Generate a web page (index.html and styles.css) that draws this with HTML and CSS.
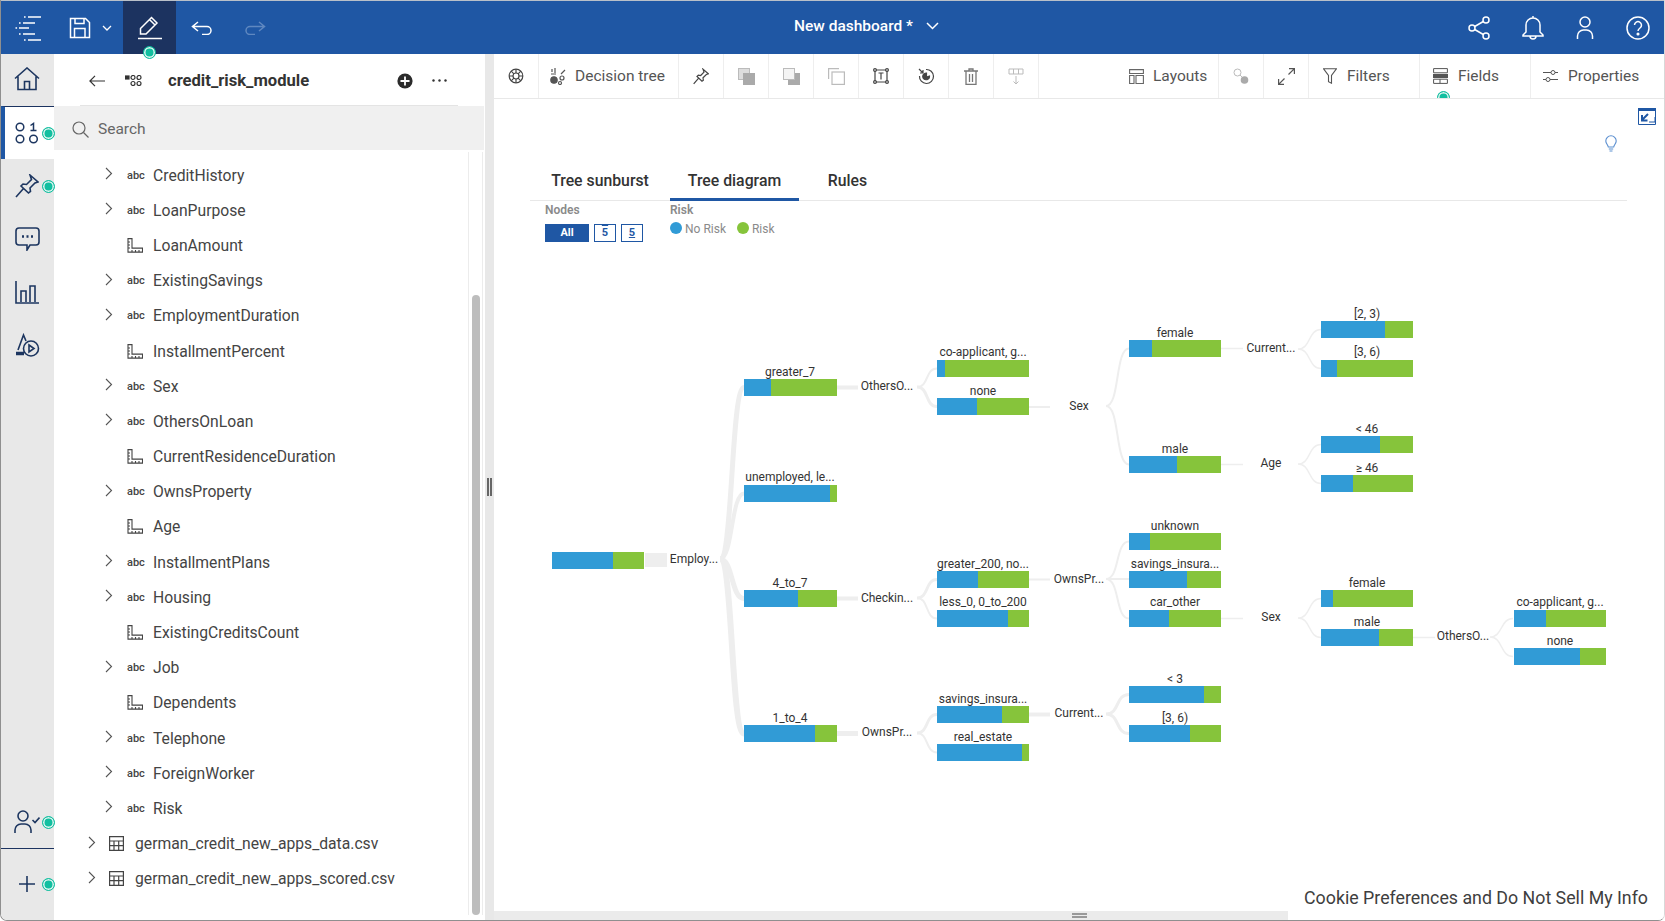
FILE: index.html
```html
<!DOCTYPE html>
<html lang="en">
<head>
<meta charset="utf-8">
<title>New dashboard</title>
<link rel="stylesheet" href="styles.css">
</head>
<body>
<div class="app">
  <header class="topbar">
    <div class="tb-left">
      <button class="tb-btn tb-menu"><svg width="27" height="26" viewBox="0 0 27 26" fill="none" stroke="#fff" stroke-width="1.6"><path d="M13 2h13M8 8h12M4 13h10M8 19h12M13 25h13"/><path d="M9 2h1.6M4 8h1.6M0.5 13h1.6M4 19h1.6M9 25h1.6"/></svg></button>
      <button class="tb-btn tb-save"><svg width="22" height="22" viewBox="0 0 22 22" fill="none" stroke="#fff" stroke-width="1.5"><path d="M1.5 1.5h15l4 4v15h-19z"/><path d="M6 1.5v5h9v-5M5.5 20.5v-9h10.500v9"/></svg><svg class="save-chev" width="10" height="6" viewBox="0 0 10 6" fill="none" stroke="#fff" stroke-width="1.300"><path d="M1 1l4 4 4-4"/></svg></button>
      <button class="tb-btn tb-edit"><svg width="26" height="24" viewBox="0 0 26 24" fill="none" stroke="#fff" stroke-width="1.5"><path d="M3.500 12.500L14.500 1.500l5.500 5.500-11 11H3.500zM12.500 3.500l5.500 5.500"/><path d="M1 22.500h24"/></svg><span class="dot dot-edit"></span></button>
      <button class="tb-btn tb-undo"><svg width="22" height="14" viewBox="0 0 22 14" fill="none" stroke="#fff" stroke-width="1.500"><path d="M7 1L1.500 5.500 7 10M1.500 5.500H16a4 4 0 0 1 0 8h-5"/></svg></button>
      <button class="tb-btn tb-redo"><svg width="22" height="14" viewBox="0 0 22 14" fill="none" stroke="#5f88c0" stroke-width="1.500"><path d="M15 1l5.500 4.500L15 10M20.500 5.500H6a4 4 0 0 0 0 8h5"/></svg></button>
    </div>
    <div class="tb-title"><span>New dashboard *</span><svg width="13" height="8" viewBox="0 0 13 8" fill="none" stroke="#fff" stroke-width="1.500"><path d="M1 1l5.500 5.500L12 1"/></svg></div>
    <div class="tb-right">
      <svg width="22" height="24" viewBox="0 0 22 24" fill="none" stroke="#fff" stroke-width="1.500"><circle cx="4" cy="12" r="3"/><circle cx="18" cy="4" r="3"/><circle cx="18" cy="20" r="3"/><path d="M6.700 10.500L15.300 5.500M6.700 13.500l8.600 5"/></svg>
      <svg width="22" height="26" viewBox="0 0 22 26" fill="none" stroke="#fff" stroke-width="1.500"><path d="M11 3a7 7 0 0 1 7 7v7l3 3v1H1v-1l3-3v-7a7 7 0 0 1 7-7zM11 1v2M8 21a3 3 0 0 0 6 0"/></svg>
      <svg width="18" height="24" viewBox="0 0 18 24" fill="none" stroke="#fff" stroke-width="1.500"><circle cx="9" cy="6" r="5"/><path d="M1.500 23v-3a6 6 0 0 1 6-6h3a6 6 0 0 1 6 6v3"/></svg>
      <svg width="24" height="24" viewBox="0 0 24 24" fill="none" stroke="#fff" stroke-width="1.500"><circle cx="12" cy="12" r="11"/><path d="M8.500 9a3.500 3.500 0 1 1 5.500 3c-1.300.9-2 1.500-2 3"/><circle cx="12" cy="18" r=".8" fill="#fff"/></svg>
    </div>
  </header>

  <div class="workspace">
    <nav class="rail">
      <div class="rail-item rail-home"><svg width="26" height="24" viewBox="0 0 26 24" fill="none" stroke="#1d3660" stroke-width="1.600"><path d="M1 11.500L13 1l12 10.500M4 9.500V22.500h18V9.500M10.500 22.500v-8h5v8"/></svg></div>
      <div class="rail-item is-active"><svg width="24" height="22" viewBox="0 0 24 22" fill="none" stroke="#1d3660" stroke-width="1.500"><circle cx="5" cy="5" r="3.800"/><circle cx="5" cy="17" r="3.800"/><circle cx="18.500" cy="17" r="3.800"/><path d="M15.500 3.500L18.500 1.500v7M15.500 8.500h6"/></svg><span class="dot dot-rail"></span></div>
      <div class="rail-item"><svg width="24" height="24" viewBox="0 0 24 24" fill="none" stroke="#1d3660" stroke-width="1.600"><path d="M15 1l8 7-3 1-5 5 .5 3.500-2 1.500-7.500-7 2-2 3.500.5 5-5zM8.500 14.500L1 23"/></svg><span class="dot dot-rail"></span></div>
      <div class="rail-item"><svg width="25" height="24" viewBox="0 0 25 24" fill="none" stroke="#1d3660" stroke-width="1.600"><path d="M4 1h17a3 3 0 0 1 3 3v11a3 3 0 0 1-3 3h-6l-3 5v-5H4a3 3 0 0 1-3-3V4a3 3 0 0 1 3-3z"/><path d="M7 9.500h2M11.500 9.500h2M16 9.500h2" stroke-width="2.400"/></svg></div>
      <div class="rail-item"><svg width="24" height="24" viewBox="0 0 24 24" fill="none" stroke="#1d3660" stroke-width="1.600"><path d="M1 1v22h23"/><path d="M6 22V11h5v11M15 22V6h5v16"/></svg></div>
      <div class="rail-item"><svg width="25" height="24" viewBox="0 0 25 24" fill="none" stroke="#1d3660" stroke-width="1.600"><path d="M3 17L8.500 2 11 8"/><path d="M1 20.500h8" stroke-width="3.500"/><circle cx="16" cy="15.500" r="7.500"/><path d="M14 12l5 3.500-5 3.500z"/></svg></div>
      <div class="rail-spacer"></div>
      <div class="rail-item rail-user"><svg width="26" height="24" viewBox="0 0 26 24" fill="none" stroke="#1d3660" stroke-width="1.600"><circle cx="9" cy="6" r="5"/><path d="M1 23v-3a6 6 0 0 1 6-6h4a6 6 0 0 1 6 6v3M18.500 10l2.500 2.500 4.500-5"/></svg><span class="dot dot-rail"></span></div>
      <div class="rail-item rail-add"><svg width="16" height="16" viewBox="0 0 16 16" fill="none" stroke="#1d3660" stroke-width="1.600"><path d="M8 0v16M0 8h16"/></svg><span class="dot dot-rail"></span></div>
    </nav>

    <aside class="panel">
      <div class="panel-head">
        <svg class="ph-back" width="16" height="12" viewBox="0 0 16 12" fill="none" stroke="#333" stroke-width="1.200"><path d="M6 .8L.9 6 6 11.200M1 6h15"/></svg>
        <svg class="ph-mod" width="17" height="11" viewBox="0 0 17 11" fill="none" stroke="#333" stroke-width="1.200"><rect x="0" y="1" width="4" height="3" fill="#333"/><circle cx="8" cy="2.500" r="2"/><circle cx="14" cy="2.500" r="2"/><circle cx="8" cy="8.500" r="2"/><circle cx="14" cy="8.500" r="2"/></svg>
        <span class="ph-title">credit_risk_module</span>
        <svg class="ph-add" width="16" height="16" viewBox="0 0 16 16"><circle cx="8" cy="8" r="7.600" fill="#2b2b2b"/><path d="M8 3.500v9M3.500 8h9" stroke="#fff" stroke-width="1.800"/></svg>
        <svg class="ph-more" width="15" height="3" viewBox="0 0 15 3" fill="#333"><circle cx="1.500" cy="1.500" r="1.200"/><circle cx="7.500" cy="1.500" r="1.200"/><circle cx="13.500" cy="1.500" r="1.200"/></svg>
      </div>
      <div class="search">
        <svg width="17" height="17" viewBox="0 0 17 17" fill="none" stroke="#666" stroke-width="1.200"><circle cx="7" cy="7" r="6"/><path d="M11.500 11.500L16.500 16.500"/></svg>
        <span>Search</span>
      </div>
      <div class="list-wrap">
        <ul class="tree-list">
          <li class="row"><svg class="chev" width="8" height="13" viewBox="0 0 8 13" fill="none" stroke="#555" stroke-width="1.100"><path d="M1 1l5.500 5.500L1 12"/></svg><span class="abc">abc</span><span class="lbl">CreditHistory</span></li>
          <li class="row"><svg class="chev" width="8" height="13" viewBox="0 0 8 13" fill="none" stroke="#555" stroke-width="1.100"><path d="M1 1l5.500 5.500L1 12"/></svg><span class="abc">abc</span><span class="lbl">LoanPurpose</span></li>
          <li class="row"><span class="nochev"></span><svg class="rule" width="16" height="15" viewBox="0 0 16 15" fill="none" stroke="#444" stroke-width="1.100"><path d="M1 .6h4v9.500h10.500v4H1zM1 4h2M1 7h2M1 10h2M5 14v-2M8.500 14v-2M12 14v-2"/></svg><span class="lbl">LoanAmount</span></li>
          <li class="row"><svg class="chev" width="8" height="13" viewBox="0 0 8 13" fill="none" stroke="#555" stroke-width="1.100"><path d="M1 1l5.500 5.500L1 12"/></svg><span class="abc">abc</span><span class="lbl">ExistingSavings</span></li>
          <li class="row"><svg class="chev" width="8" height="13" viewBox="0 0 8 13" fill="none" stroke="#555" stroke-width="1.100"><path d="M1 1l5.500 5.500L1 12"/></svg><span class="abc">abc</span><span class="lbl">EmploymentDuration</span></li>
          <li class="row"><span class="nochev"></span><svg class="rule" width="16" height="15" viewBox="0 0 16 15" fill="none" stroke="#444" stroke-width="1.100"><path d="M1 .6h4v9.500h10.500v4H1zM1 4h2M1 7h2M1 10h2M5 14v-2M8.500 14v-2M12 14v-2"/></svg><span class="lbl">InstallmentPercent</span></li>
          <li class="row"><svg class="chev" width="8" height="13" viewBox="0 0 8 13" fill="none" stroke="#555" stroke-width="1.100"><path d="M1 1l5.500 5.500L1 12"/></svg><span class="abc">abc</span><span class="lbl">Sex</span></li>
          <li class="row"><svg class="chev" width="8" height="13" viewBox="0 0 8 13" fill="none" stroke="#555" stroke-width="1.100"><path d="M1 1l5.500 5.500L1 12"/></svg><span class="abc">abc</span><span class="lbl">OthersOnLoan</span></li>
          <li class="row"><span class="nochev"></span><svg class="rule" width="16" height="15" viewBox="0 0 16 15" fill="none" stroke="#444" stroke-width="1.100"><path d="M1 .6h4v9.500h10.500v4H1zM1 4h2M1 7h2M1 10h2M5 14v-2M8.500 14v-2M12 14v-2"/></svg><span class="lbl">CurrentResidenceDuration</span></li>
          <li class="row"><svg class="chev" width="8" height="13" viewBox="0 0 8 13" fill="none" stroke="#555" stroke-width="1.100"><path d="M1 1l5.500 5.500L1 12"/></svg><span class="abc">abc</span><span class="lbl">OwnsProperty</span></li>
          <li class="row"><span class="nochev"></span><svg class="rule" width="16" height="15" viewBox="0 0 16 15" fill="none" stroke="#444" stroke-width="1.100"><path d="M1 .6h4v9.500h10.500v4H1zM1 4h2M1 7h2M1 10h2M5 14v-2M8.500 14v-2M12 14v-2"/></svg><span class="lbl">Age</span></li>
          <li class="row"><svg class="chev" width="8" height="13" viewBox="0 0 8 13" fill="none" stroke="#555" stroke-width="1.100"><path d="M1 1l5.500 5.500L1 12"/></svg><span class="abc">abc</span><span class="lbl">InstallmentPlans</span></li>
          <li class="row"><svg class="chev" width="8" height="13" viewBox="0 0 8 13" fill="none" stroke="#555" stroke-width="1.100"><path d="M1 1l5.500 5.500L1 12"/></svg><span class="abc">abc</span><span class="lbl">Housing</span></li>
          <li class="row"><span class="nochev"></span><svg class="rule" width="16" height="15" viewBox="0 0 16 15" fill="none" stroke="#444" stroke-width="1.100"><path d="M1 .6h4v9.500h10.500v4H1zM1 4h2M1 7h2M1 10h2M5 14v-2M8.500 14v-2M12 14v-2"/></svg><span class="lbl">ExistingCreditsCount</span></li>
          <li class="row"><svg class="chev" width="8" height="13" viewBox="0 0 8 13" fill="none" stroke="#555" stroke-width="1.100"><path d="M1 1l5.500 5.500L1 12"/></svg><span class="abc">abc</span><span class="lbl">Job</span></li>
          <li class="row"><span class="nochev"></span><svg class="rule" width="16" height="15" viewBox="0 0 16 15" fill="none" stroke="#444" stroke-width="1.100"><path d="M1 .6h4v9.500h10.500v4H1zM1 4h2M1 7h2M1 10h2M5 14v-2M8.500 14v-2M12 14v-2"/></svg><span class="lbl">Dependents</span></li>
          <li class="row"><svg class="chev" width="8" height="13" viewBox="0 0 8 13" fill="none" stroke="#555" stroke-width="1.100"><path d="M1 1l5.500 5.500L1 12"/></svg><span class="abc">abc</span><span class="lbl">Telephone</span></li>
          <li class="row"><svg class="chev" width="8" height="13" viewBox="0 0 8 13" fill="none" stroke="#555" stroke-width="1.100"><path d="M1 1l5.500 5.500L1 12"/></svg><span class="abc">abc</span><span class="lbl">ForeignWorker</span></li>
          <li class="row"><svg class="chev" width="8" height="13" viewBox="0 0 8 13" fill="none" stroke="#555" stroke-width="1.100"><path d="M1 1l5.500 5.500L1 12"/></svg><span class="abc">abc</span><span class="lbl">Risk</span></li>
          <li class="row row-top"><svg class="chev" width="8" height="13" viewBox="0 0 8 13" fill="none" stroke="#555" stroke-width="1.100"><path d="M1 1l5.500 5.500L1 12"/></svg><svg class="tbl" width="15" height="15" viewBox="0 0 15 15" fill="none" stroke="#444" stroke-width="1.200"><path d="M.6.6h13.800v13.800H.6zM.6 5h13.800M.6 9.700h13.800M5 5v9.400M9.700 5v9.400"/></svg><span class="lbl">german_credit_new_apps_data.csv</span></li>
          <li class="row row-top"><svg class="chev" width="8" height="13" viewBox="0 0 8 13" fill="none" stroke="#555" stroke-width="1.100"><path d="M1 1l5.500 5.500L1 12"/></svg><svg class="tbl" width="15" height="15" viewBox="0 0 15 15" fill="none" stroke="#444" stroke-width="1.200"><path d="M.6.6h13.800v13.800H.6zM.6 5h13.800M.6 9.700h13.800M5 5v9.400M9.700 5v9.400"/></svg><span class="lbl">german_credit_new_apps_scored.csv</span></li>
        </ul>
        <div class="scroll"><div class="thumb"></div></div>
      </div>
    </aside>

    <div class="splitter"><span class="grip"></span></div>

    <main class="main">
      <svg class="tree" viewBox="494 54 1171 867" width="1171" height="867">
        <g class="lk" fill="none">
          <path class="w14" d="M645 560H667"/>
          <path class="w5" d="M720 559C733 559 731 387.500 744 387.500"/>
          <path class="w4" d="M720 559C733 559 731 493.500 744 493.500"/>
          <path class="w5" d="M720 559C733 559 731 598.500 744 598.500"/>
          <path class="w6" d="M720 559C733 559 731 733.500 744 733.500"/>
          <path class="w4" d="M837 387.500H858M837 598.500H858"/>
          <path class="w5" d="M837 733.500H858"/>
          <path class="w2" d="M917 387C929 387 925 368.500 937 368.500"/>
          <path class="w3" d="M917 387C929 387 925 406.500 937 406.500"/>
          <path class="w3" d="M917 598C929 598 925 579.500 937 579.500"/>
          <path class="w2" d="M917 598C929 598 925 618.500 937 618.500"/>
          <path class="w3" d="M917 733C929 733 925 714.500 937 714.500"/>
          <path class="w2" d="M917 733C929 733 925 752.500 937 752.500"/>
          <path class="w2" d="M1029 407H1050M1029 579.500H1050"/>
          <path class="w4" d="M1029 714.500H1050"/>
          <path class="w2" d="M1106 406C1120 406 1115 348.500 1129 348.500M1106 406C1120 406 1115 464.500 1129 464.500"/>
          <path class="w2" d="M1106 579C1120 579 1115 541.500 1129 541.500M1106 579H1129M1106 579C1120 579 1115 618.500 1129 618.500"/>
          <path class="w3" d="M1106 714C1120 714 1115 694.500 1129 694.500M1106 714C1120 714 1115 733.500 1129 733.500"/>
          <path class="w1" d="M1221 348.500H1243M1221 464.500H1243M1221 618.500H1243M1413 637.500H1435"/>
          <path class="w1" d="M1298 349C1311 349 1308 329.500 1321 329.500M1298 349C1311 349 1308 368.500 1321 368.500M1298 464C1311 464 1308 444.500 1321 444.500M1298 464C1311 464 1308 483.500 1321 483.500M1298 618C1311 618 1308 598.500 1321 598.500M1298 618C1311 618 1308 637.500 1321 637.500M1490 637C1503 637 1500 618.500 1513 618.500M1490 637C1503 637 1500 656.500 1513 656.500"/>
        </g>
        <g class="bl">
          <rect x="552" y="552" width="61" height="17"/>
          <rect x="744" y="379" width="27" height="17"/>
          <rect x="744" y="485" width="86" height="17"/>
          <rect x="744" y="590" width="54" height="17"/>
          <rect x="744" y="725" width="71" height="17"/>
          <rect x="937" y="360" width="8" height="17"/>
          <rect x="937" y="398" width="40" height="17"/>
          <rect x="937" y="571" width="41" height="17"/>
          <rect x="937" y="610" width="71" height="17"/>
          <rect x="937" y="706" width="65" height="17"/>
          <rect x="937" y="744" width="85" height="17"/>
          <rect x="1129" y="340" width="23" height="17"/>
          <rect x="1129" y="456" width="48" height="17"/>
          <rect x="1129" y="533" width="21" height="17"/>
          <rect x="1129" y="571" width="58" height="17"/>
          <rect x="1129" y="610" width="40" height="17"/>
          <rect x="1129" y="686" width="75" height="17"/>
          <rect x="1129" y="725" width="61" height="17"/>
          <rect x="1321" y="321" width="64" height="17"/>
          <rect x="1321" y="360" width="16" height="17"/>
          <rect x="1321" y="436" width="59" height="17"/>
          <rect x="1321" y="475" width="32" height="17"/>
          <rect x="1321" y="590" width="12" height="17"/>
          <rect x="1321" y="629" width="58" height="17"/>
          <rect x="1514" y="610" width="32" height="17"/>
          <rect x="1514" y="648" width="66" height="17"/>
        </g>
        <g class="gr">
          <rect x="613" y="552" width="31" height="17"/>
          <rect x="771" y="379" width="66" height="17"/>
          <rect x="830" y="485" width="7" height="17"/>
          <rect x="798" y="590" width="39" height="17"/>
          <rect x="815" y="725" width="22" height="17"/>
          <rect x="945" y="360" width="84" height="17"/>
          <rect x="977" y="398" width="52" height="17"/>
          <rect x="978" y="571" width="51" height="17"/>
          <rect x="1008" y="610" width="21" height="17"/>
          <rect x="1002" y="706" width="27" height="17"/>
          <rect x="1022" y="744" width="7" height="17"/>
          <rect x="1152" y="340" width="69" height="17"/>
          <rect x="1177" y="456" width="44" height="17"/>
          <rect x="1150" y="533" width="71" height="17"/>
          <rect x="1187" y="571" width="34" height="17"/>
          <rect x="1169" y="610" width="52" height="17"/>
          <rect x="1204" y="686" width="17" height="17"/>
          <rect x="1190" y="725" width="31" height="17"/>
          <rect x="1385" y="321" width="28" height="17"/>
          <rect x="1337" y="360" width="76" height="17"/>
          <rect x="1380" y="436" width="33" height="17"/>
          <rect x="1353" y="475" width="60" height="17"/>
          <rect x="1333" y="590" width="80" height="17"/>
          <rect x="1379" y="629" width="34" height="17"/>
          <rect x="1546" y="610" width="60" height="17"/>
          <rect x="1580" y="648" width="26" height="17"/>
        </g>
        <g class="tl">
          <text x="790" y="376">greater_7</text>
          <text x="790" y="481">unemployed, le...</text>
          <text x="790" y="587">4_to_7</text>
          <text x="790" y="722">1_to_4</text>
          <text x="983" y="356">co-applicant, g...</text>
          <text x="983" y="395">none</text>
          <text x="983" y="568">greater_200, no...</text>
          <text x="983" y="606">less_0, 0_to_200</text>
          <text x="983" y="703">savings_insura...</text>
          <text x="983" y="741">real_estate</text>
          <text x="1175" y="337">female</text>
          <text x="1175" y="453">male</text>
          <text x="1175" y="530">unknown</text>
          <text x="1175" y="568">savings_insura...</text>
          <text x="1175" y="606">car_other</text>
          <text x="1175" y="683">&lt; 3</text>
          <text x="1175" y="722">[3, 6)</text>
          <text x="1367" y="318">[2, 3)</text>
          <text x="1367" y="356">[3, 6)</text>
          <text x="1367" y="433">&lt; 46</text>
          <text x="1367" y="472">≥ 46</text>
          <text x="1367" y="587">female</text>
          <text x="1367" y="626">male</text>
          <text x="1560" y="606">co-applicant, g...</text>
          <text x="1560" y="645">none</text>
          <text x="694" y="563">Employ...</text>
          <text x="887" y="390">OthersO...</text>
          <text x="887" y="602">Checkin...</text>
          <text x="887" y="736">OwnsPr...</text>
          <text x="1079" y="410">Sex</text>
          <text x="1079" y="583">OwnsPr...</text>
          <text x="1079" y="717">Current...</text>
          <text x="1271" y="352">Current...</text>
          <text x="1271" y="467">Age</text>
          <text x="1271" y="621">Sex</text>
          <text x="1463" y="640">OthersO...</text>
        </g>
      </svg>

      <div class="toolbar">
        <div class="cell"><svg width="16" height="16" viewBox="0 0 16 16" fill="none" stroke="#444" stroke-width="1.200"><circle cx="8" cy="8" r="6.800"/><circle cx="8" cy="8" r="3"/><path d="M8 1.200v3.800M8 11v3.800M1.200 8H5M11 8h3.800M3.200 3.200l2.700 2.700M10.100 10.100l2.700 2.700M12.800 3.200l-2.700 2.700M5.900 10.100l-2.700 2.700"/></svg></div>
        <div class="cell cell-viz"><svg width="16" height="17" viewBox="0 0 16 17" fill="none" stroke="#555" stroke-width="1.200"><path d="M2 1v3M5 0v5M1 6h5M11 6l4-4"/><circle cx="4" cy="12" r="3.200" fill="#555"/><circle cx="12" cy="10" r="2"/><circle cx="10" cy="15" r="1.500"/></svg><span>Decision tree</span></div>
        <div class="cell"><svg width="16" height="17" viewBox="0 0 24 24" fill="none" stroke="#444" stroke-width="1.800"><path d="M15 1l8 7-3 1-5 5 .5 3.500-2 1.500-7.500-7 2-2 3.500.500 5-5zM8.500 14.500L1 23"/></svg></div>
        <div class="cell"><svg width="17" height="17" viewBox="0 0 17 17"><rect x=".5" y=".5" width="11" height="11" fill="#ddd" stroke="#bbb"/><rect x="5" y="5" width="12" height="12" fill="#aaa"/></svg></div>
        <div class="cell"><svg width="17" height="17" viewBox="0 0 17 17"><rect x="5" y="5" width="12" height="12" fill="#aaa"/><rect x=".5" y=".5" width="11" height="11" fill="#f4f4f4" stroke="#bbb"/></svg></div>
        <div class="cell"><svg width="17" height="17" viewBox="0 0 17 17" fill="none" stroke="#bbb" stroke-width="1.200"><path d="M.6 11V.6H11"/><rect x="4" y="4" width="12.400" height="12.400"/></svg></div>
        <div class="cell"><svg width="16" height="16" viewBox="0 0 16 16" fill="none" stroke="#444" stroke-width="1.200"><path d="M3 2h10M14 3v10M13 14H3M2 13V3"/><circle cx="2" cy="2" r="1.400"/><circle cx="14" cy="2" r="1.400"/><circle cx="2" cy="14" r="1.400"/><circle cx="14" cy="14" r="1.400"/><path d="M5.500 5h5M8 5v6.500"/></svg></div>
        <div class="cell"><svg width="17" height="17" viewBox="0 0 17 17" fill="none" stroke="#444" stroke-width="1.200"><path d="M8 1.500A7 7 0 1 1 1.500 8"/><path d="M8.500 5v4l3-1a3.500 3.500 0 0 1-6.500 2 3.500 3.500 0 0 1 3.500-5z" fill="#444"/><path d="M1 1l4 4M2 5h3V2"/></svg></div>
        <div class="cell"><svg width="14" height="17" viewBox="0 0 14 17" fill="none" stroke="#777" stroke-width="1.300"><path d="M0 3h14M5 3V1h4v2M2 3v13.400h10V3M5.500 6v8M8.500 6v8"/></svg></div>
        <div class="cell"><svg width="16" height="17" viewBox="0 0 16 17" fill="none" stroke="#bbb" stroke-width="1"><path d="M1 1h14v5H1zM5.500 1v5M10.500 1v5"/><path d="M8 8v8M5.500 13.500L8 16l2.500-2.500"/></svg></div>
        <div class="tool-gap"></div>
        <div class="cell cell-text cell-layouts"><svg width="15" height="15" viewBox="0 0 15 15" fill="none" stroke="#666" stroke-width="1.100"><path d="M.6.6h13.800v3.900H.6zM.6 6.500h4.400v8H.6zM7 6.500h7.400v8H7z"/></svg><span>Layouts</span></div>
        <div class="cell"><svg width="16" height="17" viewBox="0 0 16 17"><circle cx="4.500" cy="4.500" r="3.500" fill="none" stroke="#bbb"/><path d="M7 7l3 3" stroke="#bbb"/><circle cx="11.500" cy="12" r="3.800" fill="#aaa"/></svg></div>
        <div class="cell"><svg width="17" height="17" viewBox="0 0 17 17" fill="none" stroke="#555" stroke-width="1.200"><path d="M10.500 6.500L16.400.6M11 .6h5.400V6M6.500 10.500L.6 16.400M6 16.400H.6V11"/></svg></div>
        <div class="cell cell-text cell-filters"><svg width="14" height="16" viewBox="0 0 14 16" fill="none" stroke="#555" stroke-width="1.100"><path d="M.6.8h12.800L8.500 7.500v7.700l-3-1.500V7.500z"/></svg><span>Filters</span></div>
        <div class="cell cell-text cell-fields"><svg width="15" height="16" viewBox="0 0 15 16"><path d="M.6.600h13.800v4.200H.6zM.6 11.200h13.800v4.200H.6z" fill="none" stroke="#555"/><rect y="6" width="15" height="4" fill="#555"/><path d="M7 11.200v4" stroke="#555"/></svg><span>Fields</span><span class="dot dot-fields"></span></div>
        <div class="cell cell-text cell-props"><svg width="15" height="14" viewBox="0 0 15 14" fill="none" stroke="#555" stroke-width="1"><path d="M0 3.500h8M12 3.500h3M0 10.500h3M7 10.500h8"/><circle cx="10" cy="3.500" r="2"/><circle cx="5" cy="10.500" r="2"/></svg><span>Properties</span></div>
      </div>

      <div class="content">
        <div class="hints">
          <svg class="hint-corner" width="18" height="17" viewBox="0 0 18 17" fill="none"><path d="M.5.500h17v16H.5z" stroke="#1f57a4"/><rect width="18" height="3" fill="#1f57a4"/><path d="M10 6L4 12M4 7v5.500h5.500" stroke="#1f57a4" stroke-width="2"/><path d="M11 14h6V9" stroke="#1f57a4" stroke-width="1"/></svg>
          <svg class="hint-bulb" width="12" height="17" viewBox="0 0 12 17" fill="none" stroke="#5b8fd0" stroke-width="1.100"><path d="M6 .8a5.200 5.200 0 0 1 5.200 5.200c0 2.500-2 3.500-2.500 6H3.300C2.800 9.500.8 8.500.8 6A5.200 5.200 0 0 1 6 .8zM3.800 14h4.400M4.500 16h3"/></svg>
        </div>
        <div class="tabs">
          <div class="tab">Tree sunburst</div>
          <div class="tab is-on">Tree diagram</div>
          <div class="tab">Rules</div>
        </div>
        <div class="legend">
          <div class="lg-col lg-nodes">
            <div class="lg-head">Nodes</div>
            <div class="lg-btns"><span class="btn-all">All</span><span class="btn-n over">5</span><span class="btn-n under">5</span></div>
          </div>
          <div class="lg-col">
            <div class="lg-head">Risk</div>
            <div class="lg-keys"><span class="ball ball-b"></span><span class="key">No Risk</span><span class="ball ball-g"></span><span class="key">Risk</span></div>
          </div>
        </div>
      </div>

      <div class="bottom-bar"><span class="bar-grip"></span></div>
      <div class="cookie">Cookie Preferences and Do Not Sell My Info</div>
    </main>
  </div>
</div>
</body>
</html>
```

FILE: styles.css
```css
* { box-sizing: border-box; }
html, body { margin: 0; padding: 0; background: #fff; }
body { font-family: Roboto, "Noto Sans", "Liberation Sans", sans-serif; color: #444; overflow: hidden; }
ul { list-style: none; margin: 0; padding: 0; }
button { border: 0; background: none; padding: 0; margin: 0; display: flex; align-items: center; justify-content: center; }

.app { width: 1665px; height: 921px; display: flex; flex-direction: column; border-left: 1px solid #8f8f8f; border-bottom: 1px solid #8f8f8f; border-right: 1px solid #d8d8d8; border-radius: 0 0 7px 7px; overflow: hidden; }

/* top bar */
.topbar { height: 54px; flex: none; background: #1f57a4; border-top: 1px solid #b9c0c9; display: flex; align-items: stretch; position: relative; color: #fff; }
.tb-left { display: flex; align-items: stretch; width: 600px; }
.tb-btn { height: 53px; position: relative; }
.tb-menu { width: 53px; padding-left: 1px; }
.tb-save { width: 69px; justify-content: flex-start; padding-left: 15px; }
.save-chev { margin-left: 11px; }
.tb-edit { width: 53px; background: #1c3360; }
.tb-undo { width: 52px; }
.tb-redo { width: 53px; }
.tb-title { display: flex; align-items: center; width: 304px; font-size: 15.500px; font-weight: 500; gap: 13px; padding-left: 193px; white-space: nowrap; padding-bottom: 3px; box-sizing: content-box; }
.tb-right { margin-left: auto; display: flex; align-items: center; gap: 32px; padding-right: 14px; }

.dot { position: absolute; width: 13px; height: 13px; border-radius: 50%; background: #12bfa0; border: 1px solid #12bfa0; box-shadow: inset 0 0 0 1.500px #dff5f0; }
.dot-edit { left: 20px; bottom: -5px; z-index: 3; }
.dot-rail { left: 41px; top: 50%; margin-top: -6px; }
.dot-fields { left: 17px; bottom: -6px; }

.workspace { flex: 1; display: flex; min-height: 0; }

/* rail */
.rail { width: 53px; flex: none; background: #e8e8e8; display: flex; flex-direction: column; }
.rail-item { height: 53px; flex: none; display: flex; align-items: center; justify-content: center; padding-right: 1px; position: relative; }
.rail-home { height: 52px; padding-bottom: 2px; }
.rail-item.is-active { background: #fff; border-left: 4px solid #1f57a4; border-top: 1px solid #1c3360; padding-right: 5px; }
.is-active .dot-rail { left: 37px; }
.rail-spacer { flex: 1; }
.rail-user { height: 54px; border-bottom: 1px solid #1c3360; }
.rail-add { height: 71px; padding-bottom: 1px; }
.rail-add .dot-rail { margin-top: -7px; }
.rail-add svg { margin-top: -1px; }

/* side panel */
.panel { width: 431px; flex: none; background: #fff; display: flex; flex-direction: column; min-height: 0; }
.panel-head { height: 52px; flex: none; display: flex; align-items: center; margin: 0 27px 0 26px; border-bottom: 1px solid #e4e4e4; padding: 2px 0 0 9px; }
.ph-back { margin-right: 20px; }
.ph-mod { margin-right: 26px; }
.ph-title { font-size: 16.600px; font-weight: 700; color: #333; width: 229px; white-space: nowrap; }
.ph-more { margin-left: 19px; }
.search { height: 44px; flex: none; background: #f0f0f0; display: flex; align-items: center; padding: 2px 0 0 18px; margin-right: 1px; font-size: 15.500px; color: #666; }
.search span { margin-left: 9px; }
.list-wrap { flex: 1; display: flex; min-height: 0; }
.tree-list { flex: 1; padding-top: 7.500px; min-width: 0; }
.row { height: 35.200px; display: flex; align-items: center; padding-left: 51px; font-size: 15.700px; color: #444; white-space: nowrap; }
.chev { flex: none; margin-top: -3px; }
.nochev { width: 8px; flex: none; }
.abc { width: 18px; margin-left: 14px; font-size: 11px; font-weight: 500; color: #444; }
.rule { margin-left: 14px; flex: none; margin-right: 2px; }
.lbl { margin-left: 8px; }
.row-top { padding-left: 34px; }
.tbl { margin-left: 13px; flex: none; }
.row-top .lbl { margin-left: 11px; }
.scroll { width: 15px; flex: none; margin: 2px 2px 5px 0; border-left: 1px solid #ececec; border-right: 1px solid #ececec; padding: 143px 3px 0 3px; }
.thumb { width: 8px; height: 620px; border-radius: 4px; background: #bdbdbd; }

.splitter { width: 9px; flex: none; background: #e8e8e8; position: relative; display: flex; align-items: center; justify-content: center; }
.grip { width: 5px; height: 18px; border-left: 2px solid #666; border-right: 2px solid #666; }

/* main */
.main { flex: 1; min-width: 0; background: #fff; display: flex; flex-direction: column; position: relative; }
.tree { position: absolute; left: 0; top: 0; }
.lk path { stroke: #eeeeee; }
.w14 { stroke-width: 14; } .w6 { stroke-width: 6; } .w5 { stroke-width: 5; } .w4 { stroke-width: 4; }
.w3 { stroke-width: 3; } .w2 { stroke-width: 2; } .w1 { stroke-width: 1.500; }
.bl rect { fill: #319bd6; }
.gr rect { fill: #86c43b; }
.tl text { font-family: Roboto, "Noto Sans", sans-serif; font-size: 12px; fill: #333; text-anchor: middle; }

.toolbar { height: 45px; flex: none; display: flex; align-items: stretch; border-bottom: 1px solid #e8e8e8; position: relative; font-size: 15.500px; color: #555; }
.cell { width: 45px; flex: none; display: flex; align-items: center; justify-content: center; border-right: 1px solid #eeeeee; position: relative; }
.cell-viz { width: 140px; justify-content: flex-start; padding-left: 11px; gap: 9px; }
.tool-gap { flex: 1; }
.cell-text { justify-content: flex-start; white-space: nowrap; }
.cell-layouts { width: 104px; padding-left: 14px; gap: 9px; }
.cell-filters { width: 111px; padding-left: 14px; gap: 10px; }
.cell-fields { width: 111px; padding-left: 13px; gap: 10px; overflow: hidden; }
.cell-props { width: 133px; padding-left: 12px; gap: 10px; border-right: 0; }

.content { display: flex; flex-direction: column; flex: 1; min-height: 0; position: relative; }
.hints { height: 54px; flex: none; padding-top: 9px; display: flex; flex-direction: column; align-items: flex-end; }
.hint-corner { margin-right: 8px; }
.hint-bulb { margin-top: 10px; margin-right: 47px; }
.tabs { height: 48px; flex: none; margin: 0 37px 0 36px; display: grid; grid-template-columns: 140px 129px 97px; border-bottom: 1px solid #e8e8e8; font-size: 15.800px; font-weight: 500; color: #333; }
.tab { text-align: center; padding-top: 19px; line-height: 18px; height: 48px; }
.tab.is-on { border-bottom: 3px solid #1f57a4; }
.legend { display: grid; grid-template-columns: 125px 200px; margin-left: 51px; padding-top: 1px; }
.lg-head { font-size: 12px; font-weight: 600; color: #8a8a8a; line-height: 16px; }
.lg-btns { display: flex; margin-top: 6px; }
.btn-all { width: 44px; height: 18px; background: #1f57a4; color: #fff; font-size: 11px; font-weight: 700; text-align: center; line-height: 18px; margin-right: 5px; }
.btn-n { width: 22px; height: 18px; border: 1px solid #1f57a4; color: #1f57a4; font-size: 11px; font-weight: 700; text-align: center; line-height: 16px; margin-right: 5px; }
.over { text-decoration: overline; }
.under { text-decoration: underline; }
.lg-keys { display: flex; align-items: center; margin-top: 4px; font-size: 12px; color: #8a8a8a; height: 14px; }
.ball { width: 12px; height: 12px; border-radius: 50%; flex: none; margin-top: -2px; }
.ball-b { background: #319bd6; }
.ball-g { background: #86c43b; margin-left: 11px; }
.key { margin-left: 3px; }

.bottom-bar { height: 9px; flex: none; background: #ebebeb; position: relative; display: flex; justify-content: center; align-items: center; }
.bar-grip { width: 15px; height: 5px; border-top: 2px solid #999; border-bottom: 2px solid #999; }
.cookie { position: absolute; right: 0; bottom: 0; width: 376px; height: 41px; background: #fff; padding: 8px 16px 0 0; text-align: right; font-size: 17.800px; color: #3e3e3e; white-space: nowrap; }
```
